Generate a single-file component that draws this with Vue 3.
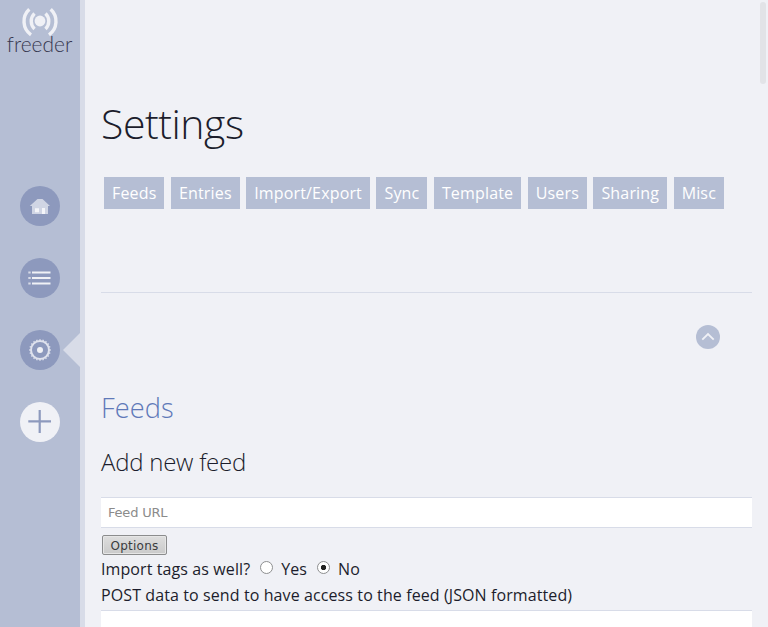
<script setup>
import { ref } from 'vue'

const tabs = ['Feeds', 'Entries', 'Import/Export', 'Sync', 'Template', 'Users', 'Sharing', 'Misc']
const importTags = ref('no')
const teeth = Array.from({ length: 20 }, (_, i) => i * 18)
</script>

<template>
  <div class="page">
    <aside class="sidebar">
      <svg class="logo" width="80" height="60" viewBox="0 0 80 60">
        <circle cx="40" cy="21" r="5.4" fill="#f0f1f6" />
        <g fill="none" stroke="#f0f1f6" stroke-width="3.4">
          <path d="M34.5 13.6A10.6 10.6 0 0 0 34.5 28.9" />
          <path d="M45.5 13.6A10.6 10.6 0 0 1 45.5 28.9" />
          <path d="M29.3 9.2A16.6 16.6 0 0 0 31 34.9" />
          <path d="M50.7 9.2A16.6 16.6 0 0 1 49 34.9" />
        </g>
        <text x="6.8" y="52.3" textLength="65.5" lengthAdjust="spacingAndGlyphs" class="wordmark">freeder</text>
      </svg>
      <nav class="menu">
        <a class="item">
          <svg width="40" height="40" viewBox="0 0 40 40">
            <path d="M17.5 13h5L30 20h-2v8H12v-8H9.8z" fill="#d0d5e4" />
            <path d="M15 22.3h4v4h-4zM22 22h3v6h-3z" fill="#f4f5f9" />
          </svg>
        </a>
        <a class="item">
          <svg width="40" height="40" viewBox="0 0 40 40" fill="#f0f1f6">
            <path d="M12 13.4h18.5v2.2H12zM12 18.9h18.5v2.2H12zM12 24.4h18.5v2.2H12z" />
            <path d="M8.3 13.4h2.4v2.2H8.3zM8.3 18.9h2.4v2.2H8.3zM8.3 24.4h2.4v2.2H8.3z" opacity=".75" />
          </svg>
        </a>
        <a class="item active">
          <svg width="40" height="40" viewBox="0 0 40 40">
            <circle cx="20" cy="20" r="9" fill="none" stroke="#dfe2ed" stroke-width="2" />
            <path v-for="a in teeth" :key="a" d="M19.3 9.2h1.4v1.4h-1.4z" fill="#dfe2ed" :transform="`rotate(${a} 20 20)`" />
            <circle cx="20" cy="20" r="3" fill="#f0f1f6" />
          </svg>
        </a>
        <a class="item add">
          <svg width="40" height="40" viewBox="0 0 40 40" fill="none" stroke="#8d99bd" stroke-width="2.2">
            <path d="M8.3 19.4H31M19.7 8v23" />
          </svg>
        </a>
      </nav>
    </aside>

    <main class="content">
      <h1>Settings</h1>
      <ul class="tabs">
        <li v-for="tab in tabs" :key="tab"><a>{{ tab }}</a></li>
      </ul>
      <section class="feeds">
        <a class="top">
          <svg width="24" height="24" viewBox="0 0 24 24" fill="none" stroke="#f0f1f6" stroke-width="1.8">
            <path d="M6.3 14.7L12 9l5.7 5.7" />
          </svg>
        </a>
        <h2>Feeds</h2>
        <h3>Add new feed</h3>
        <input class="field" type="text" placeholder="Feed URL" />
        <button class="options" type="button">Options</button>
        <p class="choice">
          Import tags as well?
          <label><input v-model="importTags" type="radio" value="yes" /> Yes</label>
          <label><input v-model="importTags" type="radio" value="no" /> No</label>
        </p>
        <p class="post">POST data to send to have access to the feed (JSON formatted)</p>
        <input class="field" type="text" />
      </section>
    </main>
    <div class="scrollbar"></div>
  </div>
</template>

<style>
body { margin: 0; background: #f0f1f6; overflow: hidden; }
</style>

<style scoped>
.page {
  display: flex;
  position: relative;
  height: 627px;
  overflow: hidden;
  background: #f0f1f6;
  color: #1c1d2c;
  font: 16px/26px "Open Sans", sans-serif;
}
.sidebar {
  flex: none;
  box-sizing: border-box;
  width: 85px;
  background: #b5bed4;
  border-right: 5px solid #d8dce8;
}
.logo { display: block; }
.wordmark { font: 300 21.5px "Lato", sans-serif; fill: #35374f; }
.menu {
  display: flex;
  flex-direction: column;
  align-items: center;
  gap: 32px;
  padding-top: 126px;
}
.item {
  position: relative;
  width: 40px;
  height: 40px;
  border-radius: 50%;
  background: #8d99bd;
}
.item svg { display: block; }
.add { background: #f0f1f6; }
.active::after {
  content: "";
  position: absolute;
  top: 3px;
  left: 43px;
  border: 17px solid transparent;
  border-left-width: 0;
  border-right-color: #d8dce8;
}
.content { flex: 1; min-width: 0; padding: 95px 16px 0; }
h1, h2, h3 { margin: 0; font-weight: 300; }
h1 { font-size: 41px; line-height: 57px; letter-spacing: -0.45px; }
.tabs {
  display: flex;
  gap: 6.5px;
  margin: 25px 0 0 3px;
  padding: 0;
  list-style: none;
}
.tabs a {
  display: block;
  padding: 0 8px;
  line-height: 32px;
  letter-spacing: 0.16px;
  background: #b5bed4;
  color: #fff;
  white-space: nowrap;
}
.feeds {
  display: flex;
  flex-direction: column;
  align-items: flex-start;
  margin-top: 83px;
  padding-top: 32px;
  border-top: 1px solid #d8dce8;
}
.top {
  align-self: flex-end;
  width: 24px;
  height: 24px;
  margin-right: 32px;
  border-radius: 50%;
  background: #b5bed4;
}
.top svg { display: block; }
h2 { margin-top: 39px; color: #5f79b9; font-size: 27.2px; line-height: 40px; letter-spacing: 0.1px; }
h3 { margin-top: 17px; font-size: 24px; line-height: 34px; letter-spacing: -0.25px; }
.field {
  box-sizing: border-box;
  width: 100%;
  height: 31px;
  padding: 0 7px;
  border: 1px solid #d8dce8;
  border-width: 1px 0;
  background: #fff;
  font: 13px "DejaVu Sans", sans-serif;
  letter-spacing: -0.2px;
}
h3 + .field { margin-top: 18px; }
.field::placeholder { color: #8b8b8b; }
.options {
  box-sizing: border-box;
  width: 65px;
  height: 20px;
  margin: 7px 0 0 1px;
  padding: 1px 0 0;
  border: 1px solid #8b8c8d;
  border-radius: 2px;
  background: linear-gradient(#dedede, #cacaca);
  box-shadow: inset 0 0 0 1px #e6e6e6;
  color: #3a3c3e;
  font: 12px/18px "DejaVu Sans", sans-serif;
  letter-spacing: 0.25px;
}
p { margin: 0; white-space: nowrap; letter-spacing: 0.1px; }
.choice { display: flex; margin-top: 1px; }
.choice label { display: flex; margin-left: 10px; }
.choice input {
  appearance: none;
  box-sizing: border-box;
  width: 13px;
  height: 13px;
  margin: 5px 8px 0 0;
  border: 1px solid #8e8f90;
  border-radius: 50%;
  background: #fff;
}
.choice input:checked { background: radial-gradient(circle, #222 2.3px, #fff 3px); }
.post + .field { margin-top: 2px; }
.scrollbar {
  position: absolute;
  top: 2px;
  right: 2px;
  width: 6px;
  height: 82px;
  border-radius: 3px;
  background: #e2e3e7;
}
</style>
